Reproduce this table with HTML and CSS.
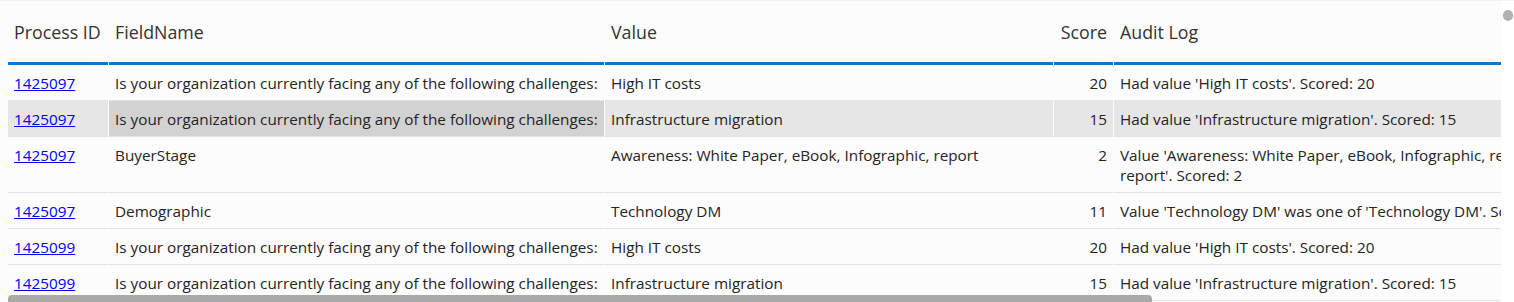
FILE: index.html
```html
<!DOCTYPE html>
<html>
<head>
<meta charset="utf-8">
<link rel="stylesheet" href="styles.css">
</head>
<body>
<div class="visual">
  <div class="viewport">
    <table class="grid">
      <colgroup>
        <col class="c-id"><col class="c-field"><col class="c-value"><col class="c-score"><col class="c-audit">
      </colgroup>
      <thead>
        <tr>
          <th>Process ID</th><th>FieldName</th><th>Value</th><th class="num">Score</th><th>Audit Log</th>
        </tr>
      </thead>
      <tbody>
        <tr>
          <td><a href="#">1425097</a></td>
          <td>Is your organization currently facing any of the following challenges:</td>
          <td>High IT costs</td>
          <td class="num">20</td>
          <td>Had value 'High IT costs'. Scored: 20</td>
        </tr>
        <tr class="hover">
          <td><a href="#">1425097</a></td>
          <td class="selected">Is your organization currently facing any of the following challenges:</td>
          <td>Infrastructure migration</td>
          <td class="num">15</td>
          <td>Had value 'Infrastructure migration'. Scored: 15</td>
        </tr>
        <tr>
          <td><a href="#">1425097</a></td>
          <td>BuyerStage</td>
          <td>Awareness: White Paper, eBook, Infographic, report</td>
          <td class="num">2</td>
          <td>Value 'Awareness: White Paper, eBook, Infographic, report' was one of 'Awareness: White Paper, eBook, Infographic,<br>report'. Scored: 2</td>
        </tr>
        <tr>
          <td><a href="#">1425097</a></td>
          <td>Demographic</td>
          <td>Technology DM</td>
          <td class="num">11</td>
          <td>Value 'Technology DM' was one of 'Technology DM'. Scored: 11</td>
        </tr>
        <tr>
          <td><a href="#">1425099</a></td>
          <td>Is your organization currently facing any of the following challenges:</td>
          <td>High IT costs</td>
          <td class="num">20</td>
          <td>Had value 'High IT costs'. Scored: 20</td>
        </tr>
        <tr>
          <td><a href="#">1425099</a></td>
          <td>Is your organization currently facing any of the following challenges:</td>
          <td>Infrastructure migration</td>
          <td class="num">15</td>
          <td>Had value 'Infrastructure migration'. Scored: 15</td>
        </tr>
      </tbody>
    </table>
    <div class="hscroll"></div>
  </div>
  <div class="vscroll"><div class="vthumb"></div></div>
</div>
</body>
</html>
```

FILE: styles.css
```css
html, body {
  margin: 0;
  padding: 0;
  background: #ffffff;
}

body {
  font-family: "Open Sans", "Noto Sans", sans-serif;
  color: #252423;
}

.visual {
  display: flex;
  height: 302px;
  padding-left: 8px;
  background: #fcfcfc;
  border-top: 1px solid #f3f3f3;
  box-sizing: border-box;
}

.viewport {
  position: relative;
  width: 1493px;
  height: 301px;
  overflow: hidden;
  background: #fcfcfc;
}

.vscroll {
  width: 13px;
  background: #ffffff;
  display: flex;
  justify-content: center;
  padding-top: 9px;
}

.vthumb {
  width: 10px;
  height: 11px;
  border-radius: 5px;
  background: #b1b1b1;
}

.grid {
  border-collapse: separate;
  border-spacing: 1px 0;
  margin-left: -1px;
  table-layout: fixed;
  width: 2100px;
}

.c-id { width: 100px; }
.c-field { width: 495px; }
.c-value { width: 448px; }
.c-score { width: 59px; }
.c-audit { width: 994px; }

th {
  height: 61px;
  padding: 0 6px;
  text-align: left;
  font-weight: 400;
  font-size: 17.8px;
  color: #333333;
  border-bottom: 3px solid #0a78c8;
  vertical-align: middle;
  white-space: nowrap;
}

td {
  padding: 8px 6px 7px;
  line-height: 20px;
  font-size: 15.3px;
  vertical-align: top;
  border-bottom: 1px solid #e3e3e3;
  white-space: nowrap;
  overflow: hidden;
}

.num {
  text-align: right;
}

td a {
  color: #0000ee;
  text-decoration: underline;
}

tr.hover td {
  background: #e6e6e6;
}

tr.hover td.selected {
  background: #d2d2d2;
}

.hscroll {
  position: absolute;
  left: 0;
  bottom: 0;
  width: 1144px;
  height: 7px;
  border-radius: 4px 4px 0 0;
  background: #a9a9a9;
}
```
